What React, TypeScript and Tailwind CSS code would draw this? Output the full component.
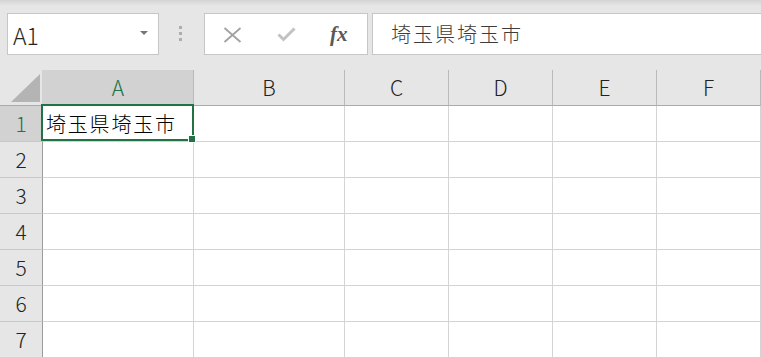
import React from "react"

const cols = ["A", "B", "C", "D", "E", "F"]
const rows = [1, 2, 3, 4, 5, 6, 7]
const jp = { fontFamily: '"Noto Sans CJK JP", "Noto Sans", sans-serif' }

function NameBox() {
  return (
    <div className="ml-[7px] w-[152px] h-[42px] border border-[#c6c6c6] bg-white flex items-center justify-between pl-[5px] pr-[10px]">
      <span className="text-[23px] font-light text-[#262626] leading-none pt-[3px]" style={jp}>
        A1
      </span>
      <span className="w-0 h-0 border-l-[4px] border-r-[4px] border-t-[4px] border-l-transparent border-r-transparent border-t-[#777777] mt-[-2px]" />
    </div>
  )
}

function FxBox() {
  return (
    <div className="ml-[22px] w-[164px] h-[42px] border border-[#c6c6c6] bg-white flex items-center pl-[18px]">
      {/* cancel */}
      <svg width="19" height="16" viewBox="0 0 19 16" className="mt-[1px]">
        <path d="M1.5 1 L17.5 15 M17.5 1 L1.5 15" stroke="#a2a2a2" strokeWidth="1.8" fill="none" />
      </svg>
      {/* enter */}
      <svg width="19" height="15" viewBox="0 0 19 15" className="ml-[35px] mt-[1px]">
        <path d="M1.5 7.5 L6.5 12.5 L17.5 1.5" stroke="#c2c2c2" strokeWidth="3" fill="none" />
      </svg>
      <span
        className="ml-[34px] text-[21px] italic font-bold text-[#595959] leading-none"
        style={{ fontFamily: '"Liberation Serif", serif' }}
      >
        fx
      </span>
    </div>
  )
}

export default function App() {
  return (
    <div className="w-full h-[357px] overflow-hidden bg-[#e6e6e6]">
      {/* toolbar */}
      <div className="h-[70px] flex items-start pt-[13px] bg-[linear-gradient(to_bottom,#d4d4d4_0px,#e6e6e6_6px)]">
        <NameBox />
        <div className="ml-[20px] mt-[13px] flex flex-col gap-[3px]">
          <span className="w-[3px] h-[3px] bg-[#adadad]" />
          <span className="w-[3px] h-[3px] bg-[#adadad]" />
          <span className="w-[3px] h-[3px] bg-[#adadad]" />
        </div>
        <FxBox />
        <div className="ml-[4px] flex-1 h-[42px] border border-r-0 border-[#c6c6c6] bg-white flex items-center pl-[18px]">
          <span className="text-[20px] font-light tracking-[2px] text-[#3c3c3c] leading-none" style={jp}>
            埼玉県埼玉市
          </span>
        </div>
      </div>

      {/* sheet */}
      <div className="grid grid-cols-[43px_151px_151px_104px_104px_104px_1fr] auto-rows-[36px] font-light" style={jp}>
        {/* corner */}
        <div className="bg-[#e6e6e6] border-b border-r border-b-[#ababab] border-r-[#d2d2d2] flex items-end">
          <svg width="42" height="35" viewBox="0 0 42 35">
            <polygon points="11,32 40,32 40,4" fill="#b4b4b4" />
          </svg>
        </div>
        {cols.map((c, i) => (
          <div
            key={c}
            className={`border-b border-r border-b-[#ababab] border-r-[#bababa] flex items-center justify-center text-[21px] leading-none ${
              i === 0 ? "bg-[#d2d2d2] text-[#217346]" : "bg-[#e6e6e6] text-[#222222]"
            }`}
          >
            {c}
          </div>
        ))}

        {rows.map((r) => (
          <React.Fragment key={r}>
            <div
              className={`border-b border-r border-b-[#c8c8c8] border-r-[#9b9b9b] flex items-center justify-center text-[21px] leading-none ${
                r === 1 ? "bg-[#d2d2d2] text-[#217346]" : "bg-[#e6e6e6] text-[#222222]"
              }`}
            >
              {r}
            </div>
            {cols.map((c) => {
              const active = r === 1 && c === "A"
              return (
                <div key={c} className="relative bg-white border-b border-r border-[#d4d4d4] flex items-center">
                  {active && (
                    <>
                      <span className="pl-[3px] text-[20px] tracking-[1.8px] text-black leading-none whitespace-nowrap">
                        埼玉県埼玉市
                      </span>
                      {/* selection frame */}
                      <div className="absolute top-[-2px] left-[-2px] right-[-1px] bottom-0 border-2 border-[#217346] pointer-events-none" />
                      <div className="absolute right-[-2px] bottom-[-1px] w-[6px] h-[6px] bg-[#217346] outline outline-1 outline-white z-10" />
                    </>
                  )}
                </div>
              )
            })}
          </React.Fragment>
        ))}
      </div>
    </div>
  )
}
